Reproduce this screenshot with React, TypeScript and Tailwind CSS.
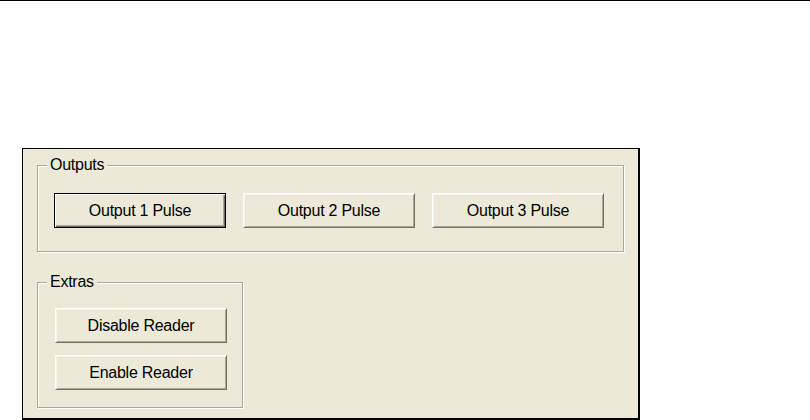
import React from "react";

interface ButtonProps {
  label: string;
  isDefault?: boolean;
}

// classic 3D push button
function PushButton({ label, isDefault }: ButtonProps) {
  const bevel = isDefault
    ? "border border-black shadow-[inset_1px_1px_0_#ffffff,inset_-1px_-1px_0_#716F64,inset_-2px_-2px_0_#ACA899]"
    : "border border-t-white border-l-white border-r-[#716F64] border-b-[#716F64] shadow-[inset_1px_1px_0_#F5F4EA,inset_-1px_-1px_0_#ACA899]";
  return (
    <button
      type="button"
      className={`w-[172px] h-[35px] flex items-center justify-center bg-[#ECE9D8] text-[16px] leading-[18px] tracking-[-0.25px] text-black ${bevel}`}
    >
      {label}
    </button>
  );
}

interface GroupBoxProps {
  title: string;
  className: string;
  children: React.ReactNode;
}

function GroupBox({ title, className, children }: GroupBoxProps) {
  return (
    <div
      className={`relative border border-[#ACA899] shadow-[inset_1px_1px_0_#ffffff,1px_1px_0_#ffffff] ${className}`}
    >
      <span className="absolute left-[9px] top-[-10px] px-[3px] bg-[#ECE9D8] text-[16px] leading-[18px] tracking-[-0.25px] text-black">
        {title}
      </span>
      {children}
    </div>
  );
}

export default function App() {
  const outputs = ["Output 1 Pulse", "Output 2 Pulse", "Output 3 Pulse"];

  return (
    <div className="w-[810px] h-[420px] bg-white border-t border-black overflow-hidden font-['Liberation_Sans',Arial,sans-serif]">
      <div className="ml-[22px] mt-[147px] w-[618px] h-[272px] bg-[#ECE9D8] border border-black border-r-2 border-b-2 pl-[14px] pt-[16px]">
        <GroupBox title="Outputs" className="w-[587px] h-[87px] flex items-start gap-[17px] pl-[16px] pt-[27px]">
          {outputs.map((o, i) => (
            <PushButton key={o} label={o} isDefault={i === 0} />
          ))}
        </GroupBox>

        <GroupBox title="Extras" className="mt-[30px] w-[206px] h-[126px] flex flex-col gap-[12px] pl-[17px] pt-[25px]">
          <PushButton label="Disable Reader" />
          <PushButton label="Enable Reader" />
        </GroupBox>
      </div>
    </div>
  );
}
